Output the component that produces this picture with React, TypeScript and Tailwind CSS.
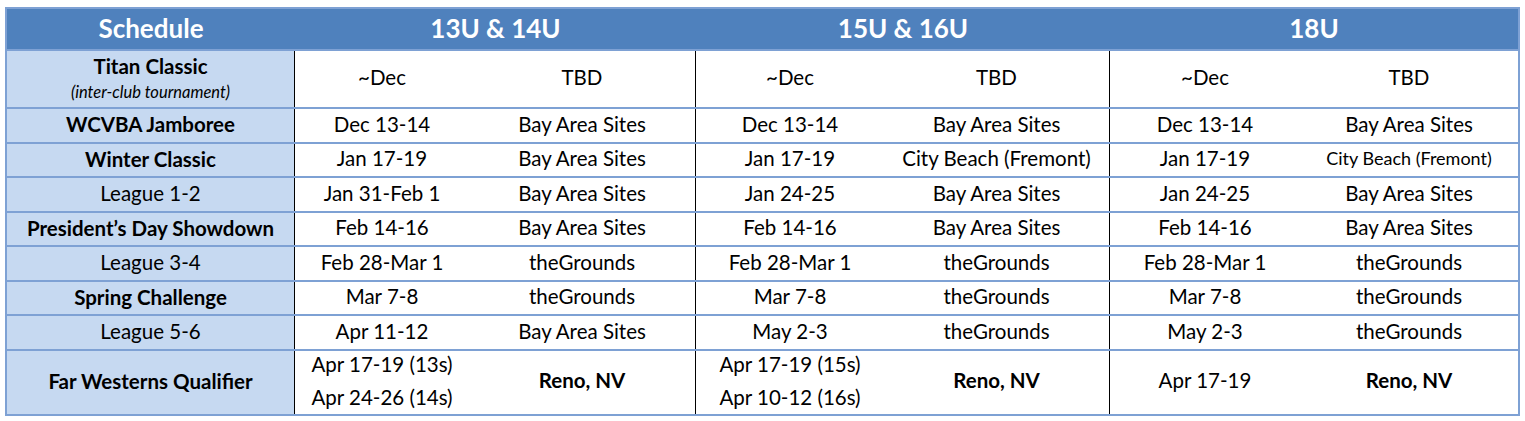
import React from "react"

type Row = {
  name: string
  bold?: boolean
  note?: string
  cells: string[][]
  h: string
}

const rows: Row[] = [
  {
    name: "Titan Classic",
    bold: true,
    note: "(inter-club tournament)",
    cells: [["~Dec"], ["TBD"], ["~Dec"], ["TBD"], ["~Dec"], ["TBD"]],
    h: "h-[58px]",
  },
  {
    name: "WCVBA Jamboree",
    bold: true,
    cells: [["Dec 13-14"], ["Bay Area Sites"], ["Dec 13-14"], ["Bay Area Sites"], ["Dec 13-14"], ["Bay Area Sites"]],
    h: "h-[34.5px]",
  },
  {
    name: "Winter Classic",
    bold: true,
    cells: [["Jan 17-19"], ["Bay Area Sites"], ["Jan 17-19"], ["City Beach (Fremont)"], ["Jan 17-19"], ["City Beach (Fremont)"]],
    h: "h-[34.5px]",
  },
  {
    name: "League 1-2",
    cells: [["Jan 31-Feb 1"], ["Bay Area Sites"], ["Jan 24-25"], ["Bay Area Sites"], ["Jan 24-25"], ["Bay Area Sites"]],
    h: "h-[34.5px]",
  },
  {
    name: "President’s Day Showdown",
    bold: true,
    cells: [["Feb 14-16"], ["Bay Area Sites"], ["Feb 14-16"], ["Bay Area Sites"], ["Feb 14-16"], ["Bay Area Sites"]],
    h: "h-[34.5px]",
  },
  {
    name: "League 3-4",
    cells: [["Feb 28-Mar 1"], ["theGrounds"], ["Feb 28-Mar 1"], ["theGrounds"], ["Feb 28-Mar 1"], ["theGrounds"]],
    h: "h-[34.5px]",
  },
  {
    name: "Spring Challenge",
    bold: true,
    cells: [["Mar 7-8"], ["theGrounds"], ["Mar 7-8"], ["theGrounds"], ["Mar 7-8"], ["theGrounds"]],
    h: "h-[34.5px]",
  },
  {
    name: "League 5-6",
    cells: [["Apr 11-12"], ["Bay Area Sites"], ["May 2-3"], ["theGrounds"], ["May 2-3"], ["theGrounds"]],
    h: "h-[34.5px]",
  },
  {
    name: "Far Westerns Qualifier",
    bold: true,
    cells: [
      ["Apr 17-19 (13s)", "Apr 24-26 (14s)"],
      ["Reno, NV"],
      ["Apr 17-19 (15s)", "Apr 10-12 (16s)"],
      ["Reno, NV"],
      ["Apr 17-19"],
      ["Reno, NV"],
    ],
    h: "h-[65px]",
  },
]

// widths of the six data columns (black divider after every second one)
const colW = ["w-[174px]", "w-[227px] border-r border-black", "w-[188px]", "w-[226px] border-r border-black", "w-[190px]", "flex-1"]

export default function App() {
  return (
    <div className="min-h-[421px] bg-white pt-[7px] pl-[5px]" style={{ fontFamily: "Lato, 'Noto Sans', sans-serif" }}>
      <div className="w-[1515px] border-2 border-[#7ea1d4] text-black">
        {/* header */}
        <div className="flex h-[40px] items-center bg-[#4f81bd] pb-[2px] text-[26px] font-bold text-white">
          <div className="w-[288px] text-center">Schedule</div>
          <div className="w-[401px] text-center">13U &amp; 14U</div>
          <div className="w-[414px] text-center">15U &amp; 16U</div>
          <div className="flex-1 text-center">18U</div>
        </div>

        {rows.map((r) => (
          <div key={r.name} className={`flex ${r.h} border-t-2 border-[#7ea1d4] text-[20.5px]`}>
            <div className="flex w-[288px] flex-col items-center justify-center border-r border-black bg-[#c6d9f1] pb-[2px] leading-none">
              <span className={r.bold ? "font-bold" : ""}>{r.name}</span>
              {r.note && <span className="mt-[8px] text-[16.5px] italic">{r.note}</span>}
            </div>
            {r.cells.map((c, i) => {
              const small = i === 5 && c[0] === "City Beach (Fremont)"
              const bold = c[0] === "Reno, NV"
              return (
                <div
                  key={i}
                  className={`flex ${colW[i]} flex-col items-center justify-center gap-[13px] pb-[3px] leading-none ${small ? "text-[18px]" : ""} ${bold ? "font-bold" : ""}`}
                >
                  {c.map((t) => (
                    <span key={t}>{t}</span>
                  ))}
                </div>
              )
            })}
          </div>
        ))}
      </div>
    </div>
  )
}
